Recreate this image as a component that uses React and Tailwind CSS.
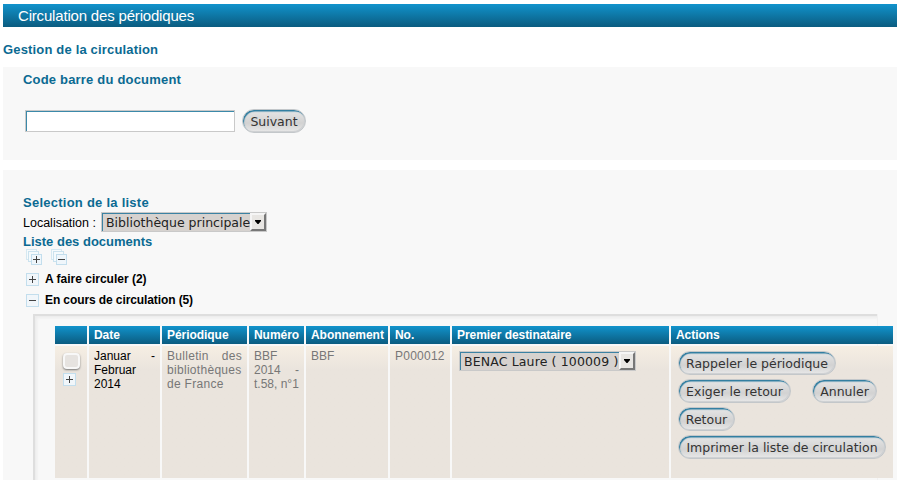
const barlow = "bg-gradient-to-b from-[#1193cc] to-[#0b5c80]";

function Pill({ children, className = "" }) {
  return (
    <button
      className={`h-6 shrink-0 rounded-full border border-[#c3c7ca] bg-gradient-to-b from-[#e6e6e6] via-[#d2d2d2] via-60% to-[#e8e8e8] text-center font-['DejaVu_Sans',sans-serif] text-[12.5px] leading-[22px] whitespace-nowrap text-[#333] shadow-[inset_1px_1.5px_1px_#2a7a9e,inset_-1px_-1px_0_#cfd1d3] ${className}`}
    >
      <span className="relative top-[0.5px]">{children}</span>
    </button>
  );
}

function Select({ children, className = "" }) {
  return (
    <div className={`flex h-5 border border-[#c9c9c9] bg-[#d6d2cf] ${className}`}>
      <div className="min-w-0 flex-1 border-t border-l border-[#3b82a3] pl-[3px] font-['DejaVu_Sans',sans-serif] text-[12.5px] leading-[17px] whitespace-nowrap text-[#222]">
        {children}
      </div>
      <div className="flex w-4 shrink-0 items-center justify-center border-2 border-t-[#f5f5f5] border-r-[#777] border-b-[#777] border-l-[#f5f5f5] bg-[#e8e6e3]">
        <svg width="6" height="4" viewBox="0 0 6 4" className="mb-px"><path d="M0 0h6v1L3.5 4h-1L0 1z" fill="#000" /></svg>
      </div>
    </div>
  );
}

function Toggle({ minus = false, className = "" }) {
  return (
    <svg width="13" height="13" viewBox="0 0 13 13" className={`block shrink-0 ${className}`} shapeRendering="crispEdges">
      <rect x=".5" y=".5" width="12" height="12" fill="#f1f6fa" stroke="#c3deed" />
      <path d="M3 6.5h7" stroke="#444" />
      {!minus && <path d="M6.5 3v7" stroke="#444" />}
    </svg>
  );
}

function StackToggle({ minus = false }) {
  return (
    <svg width="16" height="16" viewBox="0 0 16 16" className="block" shapeRendering="crispEdges">
      <rect x=".5" y=".5" width="10" height="10" fill="#f5fafc" stroke="#d5e8f1" />
      <rect x="2.5" y="2.5" width="10" height="10" fill="#f5fafc" stroke="#cbe2ee" />
      <rect x="5" y="5" width="11" height="11" fill="#c3deed" />
      <rect x="6" y="6" width="9" height="9" fill="#eff6fb" />
      <path d="M7 10.5h7" stroke="#444" />
      {!minus && <path d="M10.5 7v7" stroke="#444" />}
    </svg>
  );
}

const headings = ["", "Date", "Périodique", "Numéro", "Abonnement", "No.", "Premier destinataire", "Actions"];
const cell = "bg-gradient-to-b from-[#f6eee3] to-[#eae4dd] to-[24px] px-[5px] pt-[3px]";

export default function App() {
  return (
    <div className="h-[480px] w-[900px] overflow-hidden bg-white pt-1 pr-[3px] pl-[3px] font-['Liberation_Sans',Arial,sans-serif] text-xs text-black">
      <h1 className={`h-[23px] pl-[15px] text-[15px] leading-[24px] tracking-[-0.18px] text-white ${barlow}`}>Circulation des périodiques</h1>
      <h2 className="mt-[15px] h-[25px] text-[13px] leading-[15px] font-bold tracking-[0.17px] text-[#0b6a92]">Gestion de la circulation</h2>

      <section className="h-[93px] bg-[#f8f8f8] pt-[5px] pl-5">
        <h3 className="text-[13px] leading-[15px] font-bold tracking-[0.19px] text-[#0b6a92]">Code barre du document</h3>
        <div className="mt-[22px] flex items-center pl-[2px]">
          <input
            aria-label="Code barre du document"
            className="h-[22px] w-[210px] border border-[#c9c9c9] bg-white shadow-[inset_1px_1px_0_#3b89a9]"
          />
          <Pill className="ml-[7px] w-16">Suivant</Pill>
        </div>
      </section>

      <section className="mt-[10px] h-[310px] bg-[#f8f8f8] pt-[25px] pl-5">
        <h3 className="text-[13px] leading-[15px] font-bold tracking-[0.25px] text-[#0b6a92]">Selection de la liste</h3>
        <div className="mt-[2px] flex h-5 items-center">
          <span className="w-[78px] pt-px text-[12.5px] leading-[20px]">Localisation :</span>
          <Select className="w-[166px]">Bibliothèque principale</Select>
        </div>
        <h3 className="mt-[2px] text-[13px] leading-[15px] font-bold text-[#0b6a92]">Liste des documents</h3>
        <div className="flex gap-[9px] pl-[3px]">
          <StackToggle />
          <StackToggle minus />
        </div>
        <div className="mt-[4px] flex h-[21px] items-center gap-[6px] pl-[3px] text-xs font-bold">
          <Toggle /><span className="-mt-[2px]">A faire circuler (2)</span>
        </div>
        <div className="flex h-[21px] items-center gap-[6px] pl-[3px] text-xs font-bold">
          <Toggle minus /><span className="-mt-[2px] tracking-[-0.1px]">En cours de circulation (5)</span>
        </div>

        <div className="mt-[3px] ml-[10px] h-[171px] w-[844px] border-t-2 border-l-2 border-[#dedede] pt-[10px] pl-5 shadow-[inset_2px_2px_3px_#ececec,1px_0_0_#f1f1f1]">
          <div className="grid w-[838px] grid-cols-[32px_71px_85px_55px_82px_60px_217px_222px] gap-[2px]">
            {headings.map((h, i) => (
              <div key={i} className={`h-[18px] pl-[5px] text-xs leading-[18px] font-bold tracking-[-0.05px] whitespace-nowrap text-white ${barlow}`}>
                {h}
              </div>
            ))}
            <div className="h-[132px] bg-gradient-to-b from-[#f6eee3] to-[#eae4dd] to-[24px] pt-[7px] pl-2">
              <div className="h-4 w-[17px] rounded-[4px] border-2 border-[#f8f8f8] bg-[#e6e3e0] shadow-[0_1px_2px_#777]" />
              <Toggle className="mt-1" />
            </div>
            <div className={`${cell} text-justify leading-[14px]`}>Januar - Februar 2014</div>
            <div className={`${cell} text-justify leading-[14px] tracking-[0.3px] text-[#777]`}>Bulletin des bibliothèques de France</div>
            <div className={`${cell} text-justify leading-[14px] text-[#777]`}>BBF 2014 - t.58, n°1</div>
            <div className={`${cell} leading-[14px] text-[#777]`}>BBF</div>
            <div className={`${cell} leading-[14px] tracking-[0.24px] text-[#777]`}>P000012</div>
            <div className={cell}>
              <Select className="mt-[2px] ml-[2px] w-[177px] tracking-[0.14px]">BENAC Laure ( 100009 )</Select>
            </div>
            <div className="flex flex-col items-start gap-1 bg-gradient-to-b from-[#f6eee3] to-[#eae4dd] to-[24px] pt-[5px] pl-[7px]">
              <Pill className="w-[158px]">Rappeler le périodique</Pill>
              <div className="flex gap-[21px]">
                <Pill className="w-[113px]">Exiger le retour</Pill>
                <Pill className="w-[65px]">Annuler</Pill>
              </div>
              <Pill className="w-[57px]">Retour</Pill>
              <Pill className="w-[208px]">Imprimer la liste de circulation</Pill>
            </div>
          </div>
        </div>
      </section>
    </div>
  );
}
